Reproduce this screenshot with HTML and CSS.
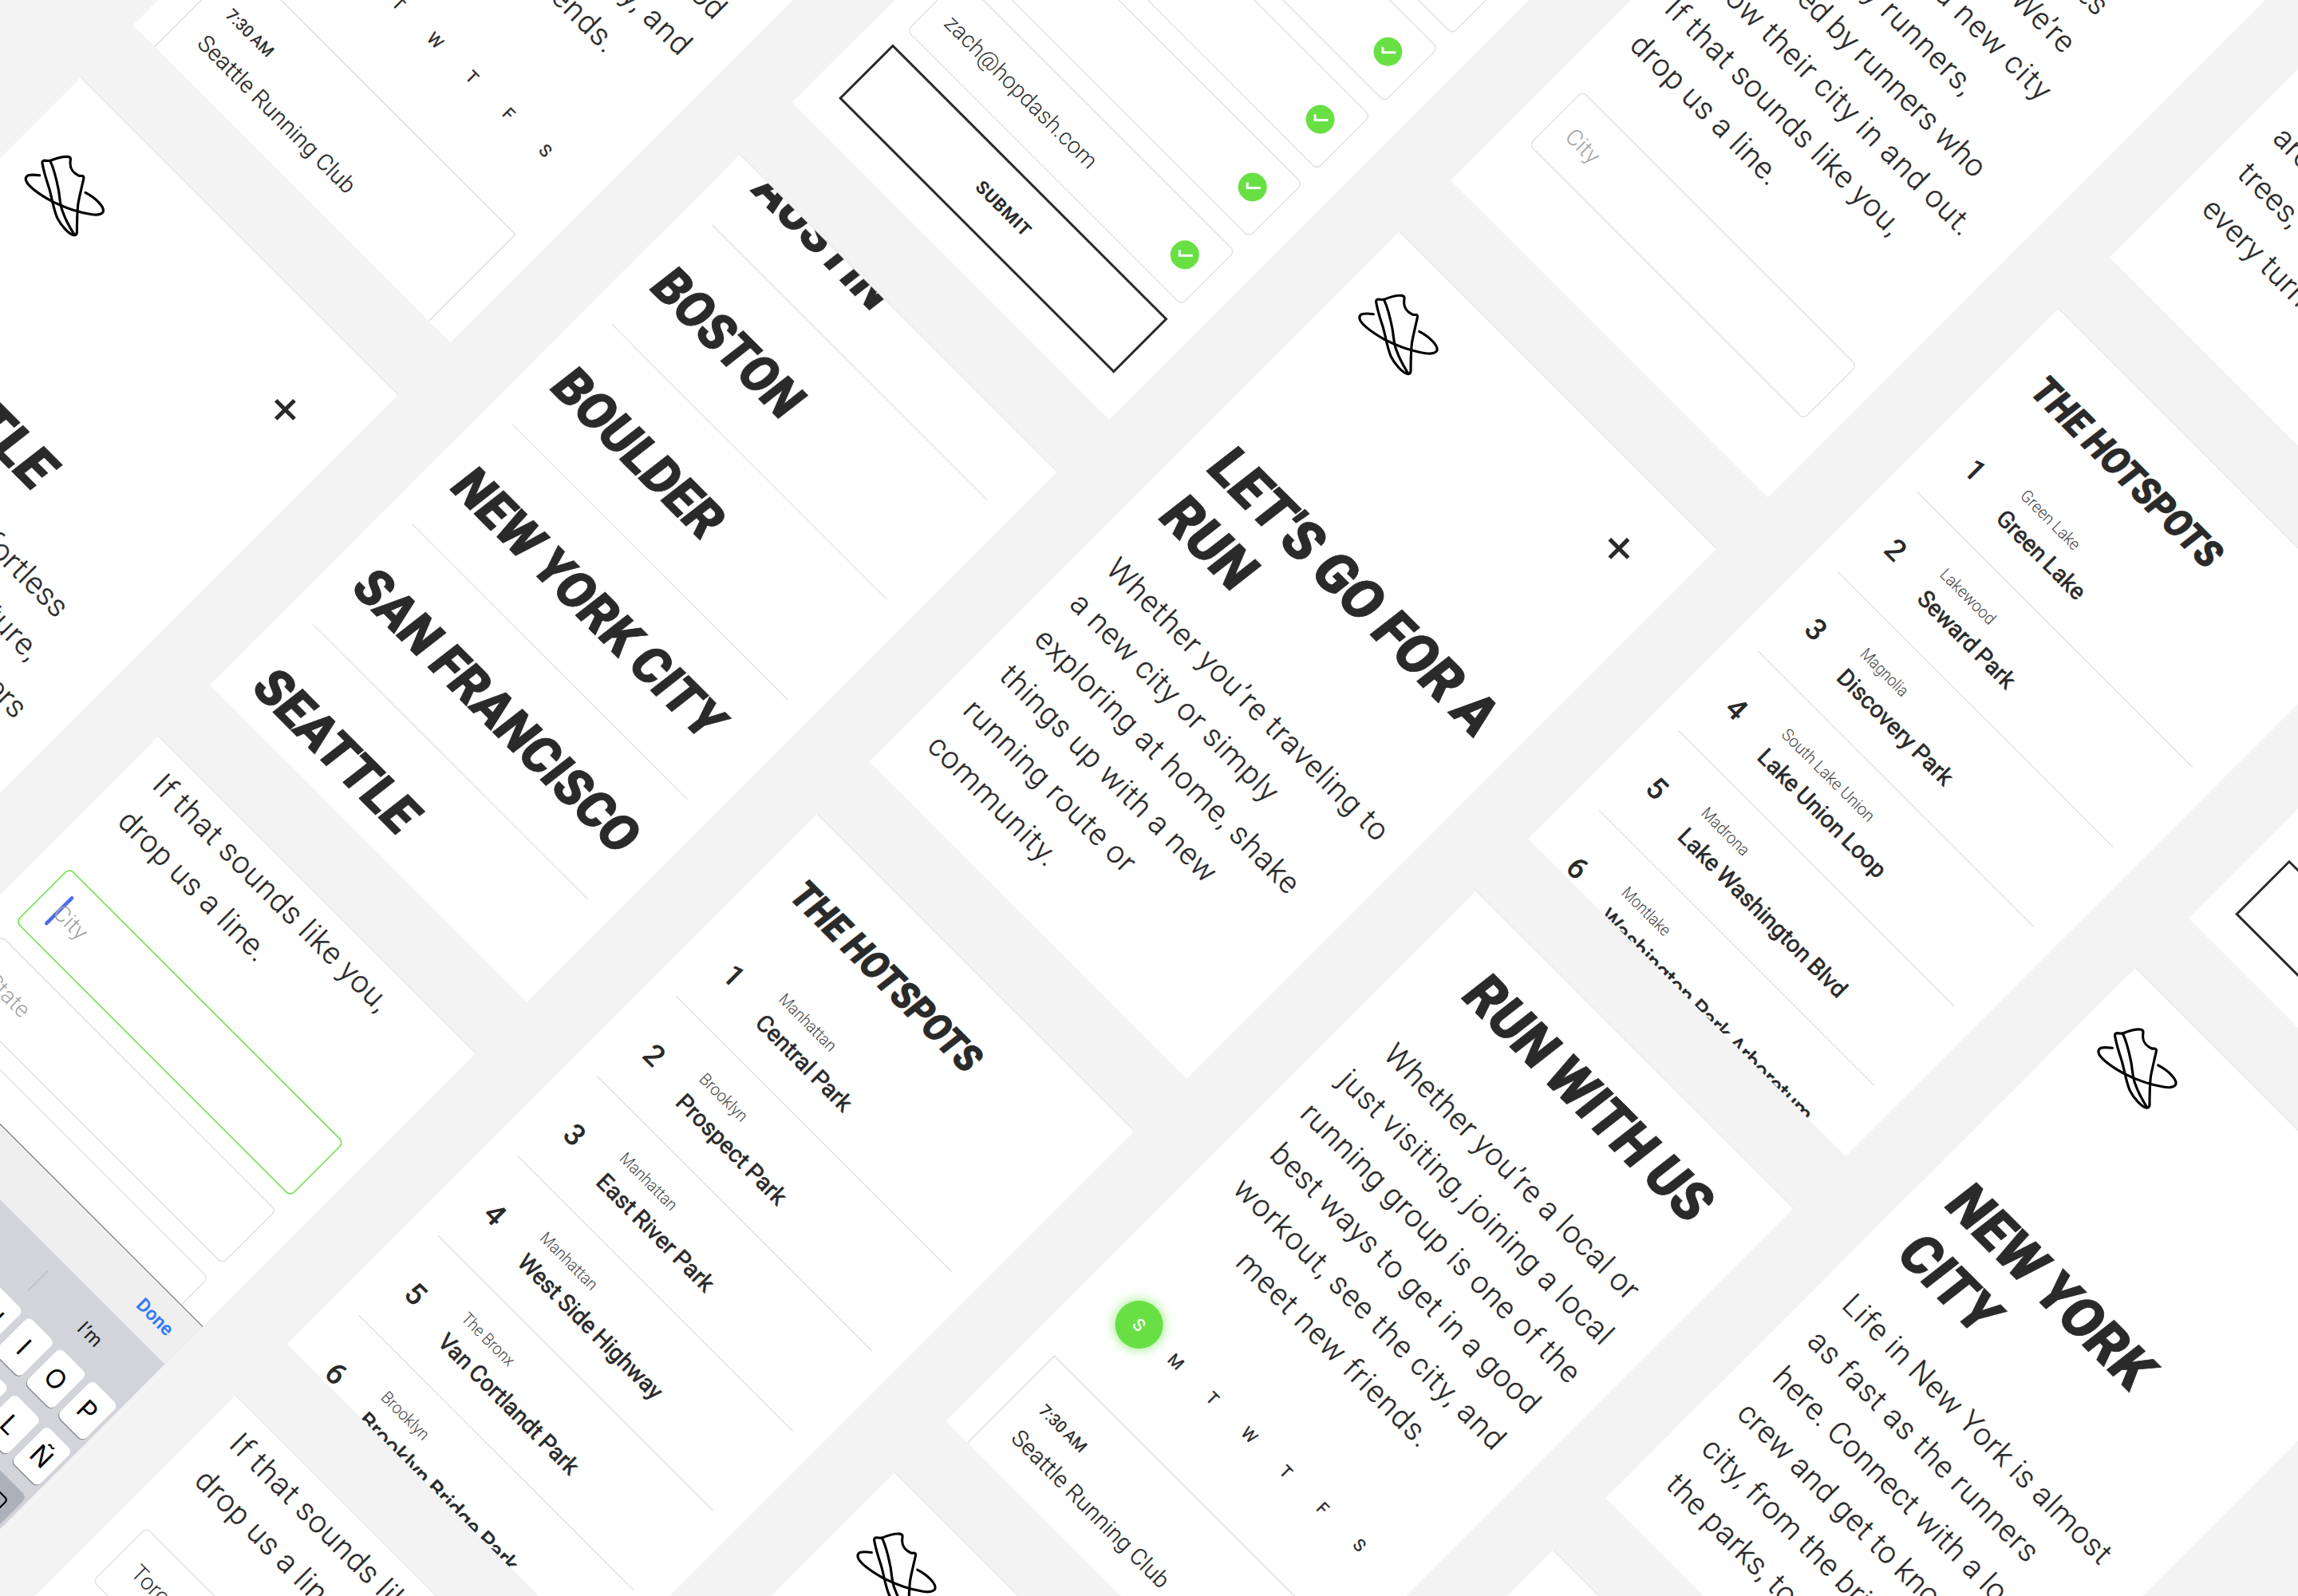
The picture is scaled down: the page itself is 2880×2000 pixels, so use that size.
FILE: index.html
```html
<!DOCTYPE html>
<html lang="en">
<head>
<meta charset="utf-8">
<title>Hop Dash mobile screens</title>
<link rel="stylesheet" href="styles.css">
</head>
<body>
<svg class="defs" width="0" height="0" aria-hidden="true">
  <symbol id="logo" viewBox="0 0 420 420">
    <g fill="none" stroke="#000" stroke-width="9.5" stroke-linecap="round" stroke-linejoin="round">
      <path d="M163 75C185 66 208 58 230 60Q241 62 240 71C236 95 240 116 270 131Q277 133 284 132Q291 133 289 143C280 184 272 214 268 240C264 280 264 320 264 345Q262 355 253 355C235 352 205 320 190 290C175 255 170 215 160 180C150 150 140 120 134 86Q132 74 142 74Q153 76 163 75Z"/>
      <path d="M163 75C180 110 188 150 195 185C200 215 200 245 212 270C222 300 240 330 253 351"/>
      <path d="M124 130Q95 126 80 130Q66 138 75 155C90 180 130 205 165 225C210 248 260 268 320 277Q352 282 362 268C370 250 335 215 296 195"/>
    </g>
  </symbol>
  <symbol id="plus" viewBox="0 0 24 24">
    <path d="M12 1V23M1 12H23" stroke="#2a2a2a" stroke-width="3.4" fill="none"/>
  </symbol>
  <symbol id="check" viewBox="0 0 24 24">
    <circle cx="12" cy="12" r="12" fill="#68e044"/>
    <path d="M7.7 8V12.7H18.6" transform="rotate(-45 12 12)" stroke="#fff" stroke-width="2" fill="none"/>
  </symbol>
</svg>

<main class="board">

  <!-- column 1 -->
  <section class="screen c1 r-690">
    <div class="runwith">
      <h1 class="title"><span data-w="267">RUN WITH US</span></h1>
      <p class="body"><span data-w="290">Whether you’re a local or</span><span data-w="312">just visiting, joining a local</span><span data-w="317">running group is one of the</span><span data-w="304">best ways to get in a good</span><span data-w="307">workout, see the city, and</span><span data-w="215">meet new friends.</span></p>
      <div class="days"><b class="on">S</b><b>M</b><b>T</b><b>W</b><b>T</b><b>F</b><b>S</b></div>
      <div class="event"><div class="time"><span data-w="49">7:30 AM</span></div><div class="club"><span data-w="177">Seattle Running Club</span></div></div>
    </div>
  </section>
  <section class="screen c1 r-2">
    <div class="intro low">
      <header><svg class="logo"><use href="#logo"/></svg><svg class="plus"><use href="#plus"/></svg></header>
      <h1 class="title"><span data-w="187">SEATTLE</span></h1>
      <p class="body"><span data-w="278">Seattle blends effortless</span><span data-w="287">outdoor access, culture,</span><span data-w="313">and a home for city runners</span></p>
    </div>
  </section>

  <!-- column 2 -->
  <section class="screen c2 r-1034">
    <form class="signup">
      <div class="field"><svg><use href="#check"/></svg></div>
      <div class="field"><svg><use href="#check"/></svg></div>
      <div class="field"><svg><use href="#check"/></svg></div>
      <div class="field"><svg><use href="#check"/></svg></div>
      <div class="field"><span data-w="171">zach@hopdash.com</span><svg><use href="#check"/></svg></div>
      <div class="submit"><span data-w="58">SUBMIT</span></div>
    </form>
  </section>
  <section class="screen c2 r-346">
    <ul class="cities">
      <li><span data-w="142.5">AUSTIN</span></li>
      <li><span data-w="153">BOSTON</span></li>
      <li><span data-w="178.5">BOULDER</span></li>
      <li><span data-w="298.5">NEW YORK CITY</span></li>
      <li><span data-w="314">SAN FRANCISCO</span></li>
      <li><span data-w="172">SEATTLE</span></li>
    </ul>
  </section>
  <section class="screen c2 r341">
    <div class="ask">
      <p class="body"><span data-w="265">If that sounds like you,</span><span data-w="162.5">drop us a line.</span></p>
      <div class="field focus"><i class="caret"></i><span class="hint" data-w="31">City</span></div>
      <div class="field"><span class="hint" data-w="43">State</span></div>
      <div class="field"></div>
    </div>
    <div class="keyboard">
      <div class="toolbar"><span data-w="35">Done</span></div>
      <div class="suggest"><span>I</span><span>I’ll</span><span>I’m</span></div>
      <div class="keys"><b>Q</b><b>W</b><b>E</b><b>R</b><b>T</b><b>Y</b><b>U</b><b>I</b><b>O</b><b>P</b></div>
      <div class="keys"><b>A</b><b>S</b><b>D</b><b>F</b><b>G</b><b>H</b><b>J</b><b>K</b><b>L</b><b>Ñ</b></div>
      <div class="keys last"><b class="dark"></b><b>Z</b><b>X</b><b>C</b><b>V</b><b>B</b><b>N</b><b>M</b><b class="dark"><svg viewBox="0 0 24 18"><path d="M8 1H20Q23 1 23 4V14Q23 17 20 17H8L1 9ZM11 6L17 12M17 6L11 12" fill="none" stroke="#000" stroke-width="1.5"/></svg></b></div>
    </div>
  </section>

  <!-- column 3 -->
  <section class="screen c3 r-1377">
    <div class="ask tall">
      <p class="body"><span data-w="257">We’re adding new routes</span><span data-w="260">to keep growing. We’re</span><span data-w="274">to help find a new city</span><span data-w="225">written by runners,</span><span data-w="281">powered by runners who</span><span data-w="306">know their city in and out.</span><span data-w="265">If that sounds like you,</span><span data-w="162.5">drop us a line.</span></p>
      <div class="field"><span class="hint" data-w="31">City</span></div>
    </div>
  </section>
  <section class="screen c3 r-690">
    <div class="intro">
      <header><svg class="logo"><use href="#logo"/></svg><svg class="plus"><use href="#plus"/></svg></header>
      <h1 class="title"><span data-w="316.5">LET'S GO FOR A</span><span data-w="85">RUN</span></h1>
      <p class="body"><span data-w="321">Whether you’re traveling to</span><span data-w="233">a new city or simply</span><span data-w="299.5">exploring at home, shake</span><span data-w="244">things up with a new</span><span data-w="191">running route or</span><span data-w="139">community.</span></p>
    </div>
  </section>
  <section class="screen c3 r-2">
    <div class="spots">
      <h2><span data-w="209.5">THE HOTSPOTS</span></h2>
      <ol>
        <li><b>1</b><div><small><span data-w="60">Manhattan</span></small><strong><span data-w="104">Central Park</span></strong></div></li>
        <li><b>2</b><div><small><span data-w="49">Brooklyn</span></small><strong><span data-w="120.5">Prospect Park</span></strong></div></li>
        <li><b>3</b><div><small><span data-w="60">Manhattan</span></small><strong><span data-w="129">East River Park</span></strong></div></li>
        <li><b>4</b><div><small><span data-w="60">Manhattan</span></small><strong><span data-w="162">West Side Highway</span></strong></div></li>
        <li><b>5</b><div><small><span data-w="56.5">The Bronx</span></small><strong><span data-w="157">Van Cortlandt Park</span></strong></div></li>
        <li><b>6</b><div><small><span data-w="49">Brooklyn</span></small><strong><span data-w="179">Brooklyn Bridge Park</span></strong></div></li>
      </ol>
    </div>
  </section>
  <section class="screen c3 r685">
    <div class="ask">
      <p class="body"><span data-w="265">If that sounds like you,</span><span data-w="162.5">drop us a line.</span></p>
      <div class="field"><span>Toronto</span></div>
      <div class="field"></div>
    </div>
  </section>

  <!-- column 4 -->
  <section class="screen c4 r-1721">
    <div class="intro low">
      <header><svg class="logo"><use href="#logo"/></svg><svg class="plus"><use href="#plus"/></svg></header>
      <h1 class="title"><span>BOULDER</span></h1>
      <p class="body"><span>Home to endless trails</span><span>and mountain views,</span><span>it is a place to slow down</span><span>around the creek and the</span><span>trees, with a surprise at</span><span>every turn.</span></p>
    </div>
  </section>
  <section class="screen c4 r-1034">
    <div class="spots">
      <h2><span data-w="209.5">THE HOTSPOTS</span></h2>
      <ol>
        <li><b>1</b><div><small><span data-w="64">Green Lake</span></small><strong><span data-w="95">Green Lake</span></strong></div></li>
        <li><b>2</b><div><small><span data-w="57.5">Lakewood</span></small><strong><span data-w="106.5">Seward Park</span></strong></div></li>
        <li><b>3</b><div><small><span data-w="49">Magnolia</span></small><strong><span data-w="127">Discovery Park</span></strong></div></li>
        <li><b>4</b><div><small><span data-w="102.5">South Lake Union</span></small><strong><span data-w="142">Lake Union Loop</span></strong></div></li>
        <li><b>5</b><div><small><span data-w="49">Madrona</span></small><strong><span data-w="188.5">Lake Washington Blvd</span></strong></div></li>
        <li><b>6</b><div><small><span data-w="50">Montlake</span></small><strong><span data-w="241.5">Washington Park Arboretum</span></strong></div></li>
      </ol>
    </div>
  </section>
  <section class="screen c4 r-346">
    <div class="runwith">
      <h1 class="title"><span data-w="267">RUN WITH US</span></h1>
      <p class="body"><span data-w="290">Whether you’re a local or</span><span data-w="312">just visiting, joining a local</span><span data-w="317">running group is one of the</span><span data-w="304">best ways to get in a good</span><span data-w="307">workout, see the city, and</span><span data-w="215">meet new friends.</span></p>
      <div class="days"><b class="on">S</b><b>M</b><b>T</b><b>W</b><b>T</b><b>F</b><b>S</b></div>
      <div class="event"><div class="time"><span data-w="49">7:30 AM</span></div><div class="club"><span data-w="177">Seattle Running Club</span></div></div>
    </div>
  </section>
  <section class="screen c4 r341">
    <div class="intro high"><header><svg class="logo"><use href="#logo"/></svg></header></div>
  </section>

  <!-- column 5 -->
  <section class="screen c5b r-1377">
    <form class="signup">
      <div class="field"></div><div class="field"></div><div class="field"></div><div class="field"></div><div class="field"></div>
      <div class="submit"><span data-w="58">SUBMIT</span></div>
    </form>
  </section>
  <section class="screen c5 r-690">
    <div class="intro high">
      <header><svg class="logo"><use href="#logo"/></svg><svg class="plus"><use href="#plus"/></svg></header>
      <h1 class="title"><span data-w="219">NEW YORK</span><span data-w="95">CITY</span></h1>
      <p class="body"><span data-w="304">Life in New York is almost</span><span data-w="259">as fast as the runners</span><span>here. Connect with a local</span><span>crew and get to know the</span><span>city, from the bridges to</span><span>the parks, together.</span></p>
    </div>
  </section>
  <section class="screen c5 r-2"></section>
</main>
<script src="fit.js"></script>
</body>
</html>
```

FILE: fit.js
```js
// Makes the ink of each line span the width set in data-w:
// short lines are tracked out, long ones are condensed.
const ctx = document.createElement('canvas').getContext('2d');
document.querySelectorAll('[data-w]').forEach((el) => {
  const cs = getComputedStyle(el);
  const text = el.textContent;
  const want = parseFloat(el.dataset.w);
  ctx.font = `${cs.fontWeight} ${cs.fontSize} ${cs.fontFamily}`;
  const m = ctx.measureText(text);
  const gaps = (text.split(' ').length - 1) * (parseFloat(cs.wordSpacing) || 0);
  const ink = m.actualBoundingBoxLeft + m.actualBoundingBoxRight + gaps;
  if (want < ink) {
    el.style.letterSpacing = '0';
    el.style.setProperty('--fit', (want / ink).toFixed(4));
  } else {
    el.style.letterSpacing = ((want - ink) / (text.length - 1)).toFixed(3) + 'px';
  }
  el.style.setProperty('--bearing', m.actualBoundingBoxLeft.toFixed(2) + 'px');
});
```

FILE: styles.css
```css
* { box-sizing: border-box; }
html, body { margin: 0; height: 100%; overflow: hidden; background: #f3f3f3; }
body { font-family: Roboto, "Liberation Sans", sans-serif; color: #2a2a2a; }
h1, h2, p, ul, ol { margin: 0; padding: 0; list-style: none; }
.defs { position: absolute; }

.board { position: absolute; left: .6px; top: 0; transform-origin: 0 0; transform: rotate(45deg) scale(1.5); }
.screen { position: absolute; width: 375px; height: 627px; background: #fff; overflow: hidden; border-top: .7px solid #e8e8e8; }
.c1 { left: 93.1px; }
.c2 { left: 528.2px; }
.c3 { left: 963px; }
.c4 { left: 1397.8px; }
.c5 { left: 1833px; }
.c5b { left: 1834.5px; }
.r-1721 { top: -1721.3px; }
.r-1377 { top: -1377.3px; }
.r-1034 { top: -1033.9px; }
.r-690 { top: -689.9px; }
.r-346 { top: -346.5px; }
.r-2 { top: -2.5px; }
.r341 { top: 340.9px; }
.r685 { top: 684.9px; }

/* shared type */
[data-w] { display: inline-block; margin-left: var(--bearing, 0); transform: scaleX(var(--fit, 1)); transform-origin: 0 78%; }
.title { font-size: 47.5px; line-height: 57.3px; font-weight: 900; white-space: nowrap; }
.title span, .cities span, .spots h2 span { display: block; width: max-content; transform: skewX(-7deg) scaleX(var(--fit, 1)); transform-origin: 0 78%; word-spacing: -.035em; -webkit-text-stroke: .5px #2a2a2a; }
.body { font-size: 25.5px; line-height: 42px; font-weight: 300; white-space: nowrap; -webkit-text-stroke: .28px #2a2a2a; }
.body span { display: block; width: max-content; letter-spacing: .6px; word-spacing: -.6px; }

/* city intro */
.intro header { display: flex; justify-content: space-between; height: 211px; padding: 16px 46px 0 13px; }
.intro.low header { height: 229.5px; padding-top: 34.5px; }
.intro.high header { height: 210.2px; padding-top: 13px; }
.logo { width: 93.33px; height: 93.33px; transform: rotate(-45deg); }
.plus { width: 24px; height: 24px; margin-top: 29px; }
.intro .title { padding-left: 26.5px; }
.intro .body { padding-left: 26.3px; margin-top: 18.2px; }
.intro.high .title { padding-left: 27.5px; }
.intro.high .body { padding-left: 27.8px; margin-top: 19px; }

/* cities menu */
.cities { margin: -60px 25px 0; }
.cities li { height: 118px; border-bottom: 1px solid #e5e5e5; padding: 32.4px 0 0 .4px; font-size: 44px; line-height: 57px; font-weight: 900; white-space: nowrap; }

/* hotspots */
.spots { padding: 36.7px 25px 0; }
.spots h2 { font-size: 32.5px; line-height: 38px; font-weight: 900; padding-left: 6px; white-space: nowrap; }
.spots ol { margin-top: 22.8px; }
.spots li { display: flex; height: 94px; border-bottom: 1px solid #e2e2e2; }
.spots li > b { width: 43px; margin-right: 20px; padding-top: 32.8px; text-align: center; font-size: 25px; line-height: 30px; font-weight: 500; }
.spots li > div { padding-top: 20.3px; white-space: nowrap; }
.spots small, .spots strong { display: block; }
.spots small { font-size: 14px; line-height: 22px; font-weight: 300; color: #444; }
.spots strong { font-size: 19.5px; line-height: 32px; font-weight: 400; word-spacing: -.7px; -webkit-text-stroke: .45px #2a2a2a; }

/* run with us */
.runwith { padding-top: 28.3px; }
.runwith .title { display: flex; justify-content: center; }
.runwith .title span { margin: 0; transform-origin: 50% 78%; }
.runwith .body { margin-top: 38px; display: flex; flex-direction: column; align-items: center; }
.runwith .body span { margin: 0; transform-origin: 50% 78%; }
.days { display: flex; justify-content: center; margin-top: 60.2px; }
.days b { width: 43.4px; height: 40px; display: flex; align-items: center; justify-content: center; font-size: 14px; font-weight: 400; -webkit-text-stroke: .25px currentColor; }
.days .on { width: 40px; margin: 0 1.7px; border-radius: 50%; background: #68e044; color: #fff; box-shadow: 0 0 10px rgba(104, 224, 68, .75); }
.event { margin: 47.5px 25px 0; height: 200px; border: 1px solid #dedede; padding: 26px 0 0 22.7px; white-space: nowrap; }
.time { font-size: 13.5px; line-height: 22px; font-weight: 400; word-spacing: -1px; -webkit-text-stroke: .25px #2a2a2a; }
.club { font-size: 19px; line-height: 30px; font-weight: 300; margin-top: 6.5px; -webkit-text-stroke: .25px #2a2a2a; }

/* forms */
.field { display: flex; align-items: center; justify-content: space-between; height: 64px; margin: 0 25px 16px; padding: 0 15px 0 17px; border: 1px solid #e2e2e2; border-radius: 5px; font-size: 19px; font-weight: 300; color: #2f2f2f; }
.field svg { width: 24px; height: 24px; margin-left: auto; }
.signup { padding-top: 132px; }
.signup .submit { display: flex; align-items: center; justify-content: center; height: 64px; margin: 0 25px; border: 2px solid #2a2a2a; font-size: 15px; font-weight: 700; }
.submit span { margin-left: 0; }
.ask { padding-top: 4.6px; }
.ask .body { padding-left: 27.2px; margin-bottom: 41.5px; }
.ask.tall .body { padding-top: 113.4px; }
.field .hint { color: #a0a1a6; }
.field.focus { border-color: #68e044; position: relative; }
.caret { position: absolute; left: 16.5px; top: 14.5px; width: 3px; height: 33px; border-radius: 2px; background: #4a6bea; }

/* keyboard */
.keyboard { position: absolute; left: 0; right: 0; top: 322px; height: 305px; background: #d2d4da; border-top: .7px solid #8d8d8d; font-family: Inter, "Liberation Sans", sans-serif; }
.toolbar { display: flex; align-items: center; justify-content: flex-end; height: 44.3px; padding-right: 15.8px; background: #efefef; color: #3478f6; font-family: Roboto, sans-serif; font-size: 15.5px; font-weight: 500; -webkit-text-stroke: .2px #3478f6; }
.suggest { display: flex; align-items: center; height: 52px; }
.suggest span { flex: 1; height: 24px; line-height: 24px; text-align: center; font-size: 16px; color: #1c1c1c; }
.suggest span + span { border-left: 1px solid #bcbec4; }
.keys { display: flex; justify-content: center; gap: 6px; height: 54px; }
.keys b { display: flex; align-items: center; justify-content: center; width: 31.5px; height: 42px; border-radius: 5px; background: #fff; box-shadow: 0 1px 0 #898a8d; color: #000; font-size: 22px; font-weight: 400; }
.keys .dark { width: 42px; background: #abb0ba; box-shadow: none; }
.keys .dark:first-child { margin-right: 8px; }
.keys .dark:last-child { margin-left: 8px; }
.keys svg { width: 24px; height: 18px; }
```
